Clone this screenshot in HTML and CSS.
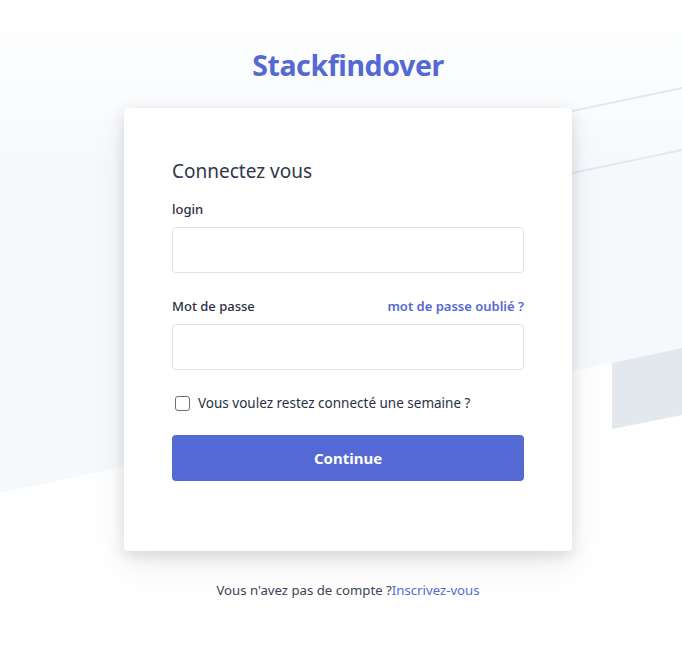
FILE: index.html
```html
<!DOCTYPE html>
<html lang="fr">
<head>
<meta charset="utf-8">
<title>Stackfindover</title>
<link rel="stylesheet" href="styles.css">
</head>
<body>
<div class="bg" aria-hidden="true">
  <svg class="bg-svg" width="682" height="665" viewBox="0 0 682 665">
    <defs>
      <linearGradient id="g" x1="0" y1="0" x2="0" y2="1">
        <stop offset="0" stop-color="#ffffff"/>
        <stop offset="0.35" stop-color="#f6f9fc"/>
        <stop offset="1" stop-color="#f6f9fc"/>
      </linearGradient>
    </defs>
    <polygon points="0,0 682,0 682,348 0,493" fill="url(#g)"/>
    <line x1="400" y1="147" x2="682" y2="88" stroke="#e3e8ee" stroke-width="2"/>
    <line x1="400" y1="209" x2="682" y2="150" stroke="#e3e8ee" stroke-width="2"/>
    <polygon points="612,363 682,348 682,415 612,429" fill="#e3e8ee"/>
  </svg>
</div>
<main class="page">
  <h1 class="logo">Stackfindover</h1>
  <div class="card">
    <h2 class="title">Connectez vous</h2>
    <form class="form">
      <div class="field">
        <label class="label" for="login">login</label>
        <input class="input" id="login" type="text">
      </div>
      <div class="field">
        <div class="label-row">
          <label class="label" for="pw">Mot de passe</label>
          <a class="link" href="#">mot de passe oublié ?</a>
        </div>
        <input class="input" id="pw" type="password">
      </div>
      <label class="check">
        <span class="box"></span>
        <span>Vous voulez restez connecté une semaine ?</span>
      </label>
      <button class="btn" type="button">Continue</button>
    </form>
  </div>
  <p class="footer">Vous n'avez pas de compte ?<a class="link-plain" href="#">Inscrivez-vous</a></p>
</main>
</body>
</html>
```
FILE: styles.css
```css
* { box-sizing: border-box; }
html, body { margin: 0; padding: 0; }
body {
  background: #ffffff;
  font-family: "Noto Sans", "Open Sans", sans-serif;
  color: #3c4257;
  width: 682px;
  height: 665px;
  overflow: hidden;
  position: relative;
}
.bg { position: absolute; inset: 0; z-index: 0; }
.bg-svg { display: block; }
.page {
  position: relative;
  z-index: 1;
  display: flex;
  flex-direction: column;
  align-items: center;
  padding-left: 14px;
  padding-top: 43px;
}
.logo {
  margin: 0;
  font-size: 28.5px;
  line-height: 44px;
  font-weight: 700;
  color: #5469d4;
  letter-spacing: -0.4px;
}
.card {
  margin-top: 21px;
  width: 448px;
  height: 443px;
  background: #fff;
  border-radius: 4px;
  box-shadow: 0 15px 35px 0 rgba(60,66,87,0.08), 0 5px 15px 0 rgba(0,0,0,0.12);
  padding: 48px 48px;
}
.title {
  margin: 0;
  font-size: 19px;
  font-weight: 400;
  line-height: 30px;
  color: #30364d;
}
.form { display: flex; flex-direction: column; margin-top: 13px; }
.field { display: flex; flex-direction: column; margin-bottom: 23px; }
.label-row { display: flex; justify-content: space-between; align-items: center; }
.label {
  font-size: 13px;
  font-weight: 500;
  line-height: 20px;
  color: #2a2f45;
  margin-bottom: 8px;
}
.link {
  font-size: 13px;
  font-weight: 600;
  color: #5469d4;
  text-decoration: none;
  margin-bottom: 8px;
}
.input {
  height: 46px;
  width: 100%;
  border: 1px solid #e3e3e8;
  border-radius: 4px;
  background: #fff;
  font: inherit;
}
.check {
  display: flex;
  align-items: center;
  gap: 8px;
  padding-left: 3px;
  font-size: 13.5px;
  color: #2a2f45;
  line-height: 20px;
  margin-top: 0;
}
.box {
  width: 15px;
  height: 15px;
  border: 1px solid #6b6f7a;
  border-radius: 3px;
  background: #fff;
  flex: none;
}
.btn {
  margin-top: 22px;
  height: 46px;
  width: 100%;
  border: 0;
  border-radius: 4px;
  background: #5469d4;
  color: #fff;
  font-family: inherit;
  font-size: 15px;
  font-weight: 700;
}
.footer {
  margin: 29px 0 0;
  font-size: 13.2px;
  line-height: 20px;
  color: #3c4257;
}
.link-plain { color: #5469d4; text-decoration: none; }
```
